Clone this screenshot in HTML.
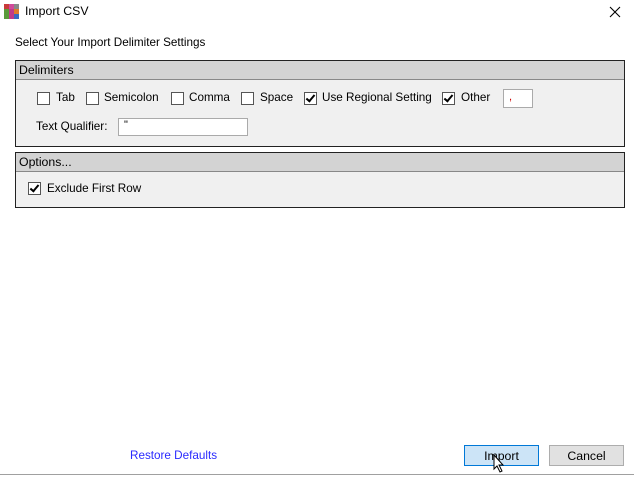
<!DOCTYPE html>
<html><head><style>
body{margin:0;width:634px;height:477px;background:#fff;font-family:"Liberation Sans",sans-serif;font-size:11.7px;color:#000;position:relative;overflow:hidden}
.a{position:absolute;white-space:nowrap}
.cb{position:absolute;width:11px;height:11px;border:1px solid #555;background:#fff}
.cb.c::after{content:"";position:absolute;left:3px;top:0px;width:3px;height:7px;border:solid #000;border-width:0 2px 2px 0;transform:rotate(40deg)}
.grp{position:absolute;left:15px;width:608px;border:1px solid #222;background:#f0f0f0}
.hd{height:18px;background:#d3d3d3;border-bottom:1px solid #888;padding-left:3px;line-height:18px;font-size:12.3px}
.in{position:absolute;background:#fff;border:1px solid #aaa}
.btn{position:absolute;top:445px;height:19px;border:1px solid #adadad;background:#e1e1e1;text-align:center;line-height:21px;font-size:12.3px}
</style></head><body>
<div class="a" style="left:4px;top:4px;width:15px;height:15px">
<div style="position:absolute;left:0;top:0;width:5px;height:5px;background:#c83a3a"></div>
<div style="position:absolute;left:5px;top:0;width:5px;height:5px;background:#d04a9a"></div>
<div style="position:absolute;left:10px;top:0;width:5px;height:5px;background:#888"></div>
<div style="position:absolute;left:0;top:5px;width:5px;height:10px;background:#5a9a3a"></div>
<div style="position:absolute;left:5px;top:5px;width:5px;height:10px;background:#c03a8a"></div>
<div style="position:absolute;left:10px;top:5px;width:5px;height:5px;background:#e07a2a"></div>
<div style="position:absolute;left:10px;top:10px;width:5px;height:5px;background:#3a6ac0"></div>
</div>
<div class="a" style="left:25px;top:4px;font-size:12.3px">Import CSV</div>
<svg class="a" style="left:609px;top:6px" width="12" height="12"><path d="M1 1 L11 11 M11 1 L1 11" stroke="#000" stroke-width="1.1"/></svg>
<div class="a" style="left:15px;top:36px">Select Your Import Delimiter Settings</div>

<div class="grp" style="top:60px;height:85px"><div class="hd">Delimiters</div></div>
<div class="cb" style="left:37px;top:92px"></div><div class="a" style="left:56px;top:91px">Tab</div>
<div class="cb" style="left:86px;top:92px"></div><div class="a" style="left:104px;top:91px">Semicolon</div>
<div class="cb" style="left:171px;top:92px"></div><div class="a" style="left:189px;top:91px">Comma</div>
<div class="cb" style="left:241px;top:92px"></div><div class="a" style="left:260px;top:91px">Space</div>
<div class="cb c" style="left:304px;top:92px"></div><div class="a" style="left:322px;top:91px">Use Regional Setting</div>
<div class="cb c" style="left:442px;top:92px"></div><div class="a" style="left:461px;top:91px">Other</div>
<div class="in" style="left:503px;top:89px;width:28px;height:17px"><span class="a" style="left:5px;top:1px;color:#c00;font-size:11px">,</span></div>
<div class="a" style="left:36px;top:120px">Text Qualifier:</div>
<div class="in" style="left:118px;top:118px;width:128px;height:16px"><span class="a" style="left:5px;top:0px;font-size:11px">"</span></div>

<div class="grp" style="top:152px;height:54px"><div class="hd">Options...</div></div>
<div class="cb c" style="left:28px;top:182px"></div><div class="a" style="left:47px;top:182px">Exclude First Row</div>

<div class="a" style="left:130px;top:449px;color:#2a2aff">Restore Defaults</div>
<div class="btn" style="left:464px;width:73px;background:#cce4f7;border-color:#0078d7">Import</div>
<div class="btn" style="left:549px;width:73px">Cancel</div>
<div class="a" style="left:0;top:474px;width:634px;height:1px;background:#a0a0a0"></div>
<svg class="a" style="left:493px;top:454px" width="12" height="19"><path d="M1 1 L1 15 L4 12 L7 18 L9 17 L6 11 L10 11 Z" fill="#fff" stroke="#000" stroke-width="1"/></svg>
</body></html>
